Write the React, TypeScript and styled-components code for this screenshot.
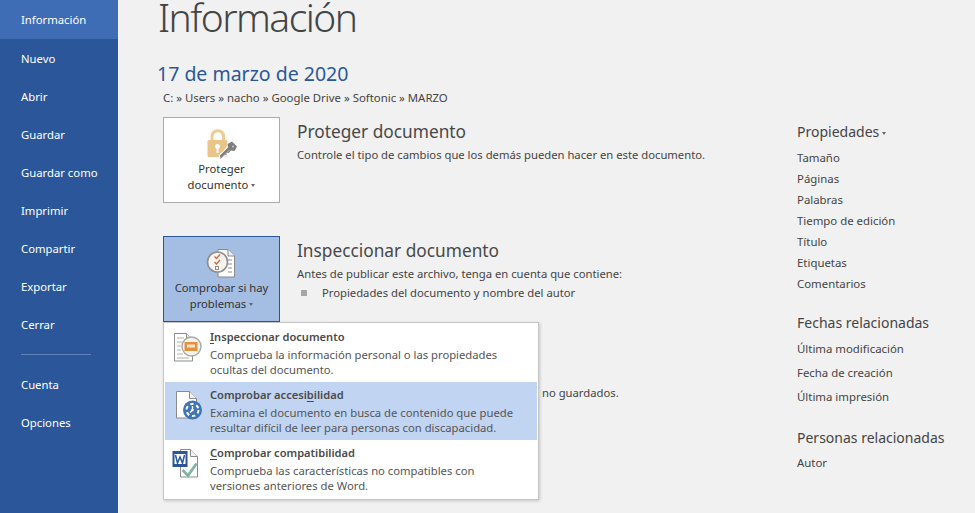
import React from 'react';
import styled, { createGlobalStyle } from 'styled-components';

const Global = createGlobalStyle`
  html, body { margin: 0; padding: 0; height: 100%; overflow: hidden; background: #f1f1f1; }
  body { font-family: "Noto Sans", "Open Sans", sans-serif; color: #444; }
`;
const Page = styled.div`display: flex; width: 975px; height: 513px; overflow: hidden; background: #f1f1f1;`;
const Sidebar = styled.nav`width: 118px; flex: none; background: #2b579a; display: flex; flex-direction: column;`;
const NavItem = styled.div<{ $active?: boolean }>`
  height: ${p => (p.$active ? 39 : 38)}px; padding-left: 21px; display: flex; align-items: center; flex: none;
  font-size: 11.3px; color: #fff; background: ${p => (p.$active ? '#3e6db5' : 'transparent')};
`;
const NavDivider = styled.div`height: 1px; margin: 11px 27px 10px 21px; background: #5f83ba; flex: none;`;
const Main = styled.main`flex: 1; display: flex; min-width: 0;`;
const Content = styled.div`width: 679px; flex: none; padding-left: 40px; box-sizing: border-box;`;
const Title = styled.h1`
  margin: 0; font-size: 39px; line-height: 34px; font-weight: 300; color: #444; letter-spacing: -1.55px;
  font-family: "Noto Sans", sans-serif;
`;
const DateLine = styled.div`margin-top: 26px; font-size: 19.5px; line-height: 27px; color: #2b579a; margin-left: -1px;`;
const PathLine = styled.div`margin: 3px 0 0 5px; font-size: 11.38px; line-height: 16px; color: #444; white-space: nowrap;`;
const Section = styled.section<{ $gap?: number }>`display: flex; margin: ${p => p.$gap ?? 0}px 0 0 5px; align-items: flex-start;`;
const ButtonWrap = styled.div`position: relative; flex: none;`;
const BigButton = styled.div<{ $on?: boolean }>`
  width: 117px; height: 86px; box-sizing: border-box; display: flex; flex-direction: column; align-items: center;
  border: 1px solid ${p => (p.$on ? '#2b579a' : '#ababab')}; background: ${p => (p.$on ? '#a3bde3' : '#fff')};
  padding-top: 9px; font-size: 11.25px; line-height: 16px; text-align: center; color: #333;
`;
const BigIcon = styled.svg`width: 34px; height: 34px; flex: none;`;
const Caret = styled.span`
  display: inline-block; width: 0; height: 0; margin-left: 3px; vertical-align: 2px;
  border-left: 2.5px solid transparent; border-right: 2.5px solid transparent; border-top: 3px solid #666;
`;
const SectionBody = styled.div`margin-left: 17px; padding-top: 3px; min-width: 0;`;
const SectionTitle = styled.h2`margin: 0; font-size: 17.3px; line-height: 24px; font-weight: 400; color: #484848; white-space: nowrap;`;
const SectionText = styled.p`margin: 3px 0 0; font-size: 11.25px; line-height: 16px; color: #444; white-space: nowrap;`;
const Bullet = styled.div`display: flex; align-items: center; margin-top: 3px; font-size: 11.25px; line-height: 16px; white-space: nowrap;`;
const BulletMark = styled.span`width: 6px; height: 6px; margin: 0 15px 0 4px; background: #a6a6a6; flex: none;`;
const TailLine = styled.div`margin: 63px 0 0 384px; font-size: 11.25px; line-height: 16px; white-space: nowrap;`;
const Menu = styled.div`
  position: absolute; top: 100%; left: 0; width: 376px; height: 178px; box-sizing: border-box; padding: 1px;
  background: #fff; border: 1px solid #c6c6c6; box-shadow: 1px 1px 3px rgba(0,0,0,.18); z-index: 2; text-align: left;
`;
const MenuItem = styled.div<{ $on?: boolean }>`
  height: 58px; display: flex; background: ${p => (p.$on ? '#c1d4f1' : 'transparent')};
`;
const MenuIconBox = styled.div`width: 45px; flex: none; display: flex; justify-content: center; padding-top: 6px; box-sizing: border-box;`;
const MenuIcon = styled.svg`width: 32px; height: 34px;`;
const MenuBody = styled.div`padding-top: 4px; min-width: 0;`;
const MenuTitle = styled.div`font-size: 11.1px; line-height: 17px; font-weight: 600; color: #4a4a4a; white-space: nowrap; & u { text-underline-offset: 2px; }`;
const MenuText = styled.div`margin-top: 2px; font-size: 11.25px; line-height: 15px; color: #555; white-space: nowrap;`;
const Side = styled.aside`flex: 1; padding-top: 122px; min-width: 0;`;
const SideHead = styled.h3<{ $gap?: number }>`margin: ${p => p.$gap ?? 0}px 0 0; font-size: 14px; line-height: 20px; font-weight: 400; color: #444; white-space: nowrap;`;
const SideList = styled.div<{ $step: number; $top: number }>`
  margin-top: ${p => p.$top}px; font-size: 11.4px; & > div { height: ${p => p.$step}px; line-height: ${p => p.$step}px; white-space: nowrap; color: #444; }
`;

const nav = ['Nuevo', 'Abrir', 'Guardar', 'Guardar como', 'Imprimir', 'Compartir', 'Exportar', 'Cerrar'];

const LockIcon = () => (
  <BigIcon viewBox="0 0 34 34">
    <path d="M7 14V9.5a5.8 5.8 0 0 1 11.6 0V14" fill="none" stroke="#ecca92" strokeWidth="3" />
    <rect x="2.5" y="13" width="20" height="17" rx="1.5" fill="#eac58a" />
    <circle cx="12.5" cy="19.5" r="2.4" fill="#fff" />
    <rect x="11.5" y="20" width="2" height="6" fill="#fff" />
    <path d="M13.5 33l.5-5 7.5-7.500 1-5 5-2 5.500 6-2.500 5-4 1-2 2h-2v2h-2l-2 2.500z" fill="#fff" />
    <path d="M15.500 32l-.5-3.500 8-8-.5-3.500 4.500-2.500 5 5-2.500 4.500-3.500-.5-2.500 2.500h-2v2h-2l-2 2z" fill="#7d7d7d" />
    <path d="M17 30.500l7.500-7.500" stroke="#c2c2c2" strokeWidth="1" />
    <circle cx="28" cy="19.500" r="1" fill="#c9c9c9" />
  </BigIcon>
);
const CheckIcon = () => (
  <BigIcon viewBox="0 0 34 34">
    <path d="M13 3.500h10l6.500 6.500v21H13z" fill="#fff" stroke="#8a8a8a" />
    <path d="M23 3.500V10h6.500" fill="#eee" stroke="#8a8a8a" />
    <path d="M23 14h4M23 18h4M23 22h4M23 26h4" stroke="#8f8f8f" />
    <circle cx="12.500" cy="16" r="10" fill="#f7f4f0" stroke="#8f8f8f" strokeWidth="1.600" />
    <path d="M9.500 10.500l2 2 3.500-4M9.500 16l2 2 3.500-4" fill="none" stroke="#d2673b" strokeWidth="1.400" />
    <rect x="10.500" y="20.500" width="3" height="3" fill="none" stroke="#8f8f8f" />
  </BigIcon>
);
const InspectIcon = () => (
  <MenuIcon viewBox="0 0 32 34">
    <path d="M2.500 3.500h12l6 6v21.500h-18z" fill="#fff" stroke="#8c8c8c" />
    <path d="M14.500 3.500v6h6" fill="#eee" stroke="#8c8c8c" />
    <path d="M5 8h7M5 12h6M5 16h4M5 20h4M5 24h6M5 28h12" stroke="#b0b0b0" />
    <circle cx="19.500" cy="16.500" r="9.500" fill="#f8f3ea" stroke="#a8a8a8" strokeWidth="1.400" />
    <rect x="12.500" y="12" width="13" height="9" fill="#e3913f" />
    <rect x="15" y="14.500" width="8" height="3" fill="#fbe5c8" />
  </MenuIcon>
);
const AccessIcon = () => (
  <MenuIcon viewBox="0 0 32 34">
    <path d="M4.500 3.500h13l7 7v19.500h-20z" fill="#fff" stroke="#8c8c8c" />
    <path d="M17.500 3.500v7h7" fill="#f1f1f1" stroke="#8c8c8c" />
    <circle cx="20.500" cy="22" r="9.500" fill="#3f74b5" />
    <circle cx="20.500" cy="22" r="6" fill="none" stroke="#fff" strokeWidth="2" strokeDasharray="3.500 2.800" />
    <path d="M20.500 22v-4M20.500 22l-2.500 2.500" stroke="#fff" strokeWidth="1.400" />
    <circle cx="20.500" cy="22" r="1.200" fill="#fff" />
  </MenuIcon>
);
const CompatIcon = () => (
  <MenuIcon viewBox="0 0 32 34">
    <path d="M8.500 3.500h10l7 7v20.500h-17z" fill="#fff" stroke="#8c8c8c" />
    <path d="M18.500 3.500v7h7" fill="#f1f1f1" stroke="#8c8c8c" />
    <rect x="0.500" y="5" width="15" height="16" fill="#2b579a" />
    <rect x="2.500" y="8" width="11" height="10" fill="#fff" />
    <path d="M3.500 9l2 8 2.500-6 2.500 6 2-8" fill="none" stroke="#2b579a" strokeWidth="1.500" />
    <path d="M10.500 24l5.500 5.500 8.500-12" fill="none" stroke="#7fb3a4" strokeWidth="2.800" />
  </MenuIcon>
);

export default function App() {
  return (
    <Page>
      <Global />
      <Sidebar>
        <NavItem $active>Información</NavItem>
        {nav.map(n => <NavItem key={n}>{n}</NavItem>)}
        <NavDivider />
        <NavItem>Cuenta</NavItem>
        <NavItem>Opciones</NavItem>
      </Sidebar>
      <Main>
        <Content>
          <Title>Información</Title>
          <DateLine>17 de marzo de 2020</DateLine>
          <PathLine>C: » Users » nacho » Google Drive » Softonic » MARZO</PathLine>
          <Section $gap={11}>
            <ButtonWrap>
              <BigButton>
                <LockIcon />
                <span>Proteger</span>
                <span>documento<Caret /></span>
              </BigButton>
            </ButtonWrap>
            <SectionBody>
              <SectionTitle>Proteger documento</SectionTitle>
              <SectionText>Controle el tipo de cambios que los demás pueden hacer en este documento.</SectionText>
            </SectionBody>
          </Section>
          <Section $gap={33}>
            <ButtonWrap>
              <BigButton $on>
                <CheckIcon />
                <span>Comprobar si hay</span>
                <span>problemas<Caret /></span>
              </BigButton>
              <Menu>
                <MenuItem>
                  <MenuIconBox><InspectIcon /></MenuIconBox>
                  <MenuBody>
                    <MenuTitle><u>I</u>nspeccionar documento</MenuTitle>
                    <MenuText>Comprueba la información personal o las propiedades<br />ocultas del documento.</MenuText>
                  </MenuBody>
                </MenuItem>
                <MenuItem $on>
                  <MenuIconBox><AccessIcon /></MenuIconBox>
                  <MenuBody>
                    <MenuTitle>Comprobar accesi<u>b</u>ilidad</MenuTitle>
                    <MenuText>Examina el documento en busca de contenido que puede<br />resultar difícil de leer para personas con discapacidad.</MenuText>
                  </MenuBody>
                </MenuItem>
                <MenuItem>
                  <MenuIconBox><CompatIcon /></MenuIconBox>
                  <MenuBody>
                    <MenuTitle><u>C</u>omprobar compatibilidad</MenuTitle>
                    <MenuText>Comprueba las características no compatibles con<br />versiones anteriores de Word.</MenuText>
                  </MenuBody>
                </MenuItem>
              </Menu>
            </ButtonWrap>
            <SectionBody>
              <SectionTitle>Inspeccionar documento</SectionTitle>
              <SectionText>Antes de publicar este archivo, tenga en cuenta que contiene:</SectionText>
              <Bullet><BulletMark />Propiedades del documento y nombre del autor</Bullet>
            </SectionBody>
          </Section>
          <TailLine>no guardados.</TailLine>
        </Content>
        <Side>
          <SideHead>Propiedades<Caret /></SideHead>
          <SideList $step={21} $top={5}>
            {['Tamaño', 'Páginas', 'Palabras', 'Tiempo de edición', 'Título', 'Etiquetas', 'Comentarios'].map(t => <div key={t}>{t}</div>)}
          </SideList>
          <SideHead $gap={19}>Fechas relacionadas</SideHead>
          <SideList $step={24} $top={4}>
            {['Última modificación', 'Fecha de creación', 'Última impresión'].map(t => <div key={t}>{t}</div>)}
          </SideList>
          <SideHead $gap={19}>Personas relacionadas</SideHead>
          <SideList $step={24} $top={3}>
            <div>Autor</div>
          </SideList>
        </Side>
      </Main>
    </Page>
  );
}
